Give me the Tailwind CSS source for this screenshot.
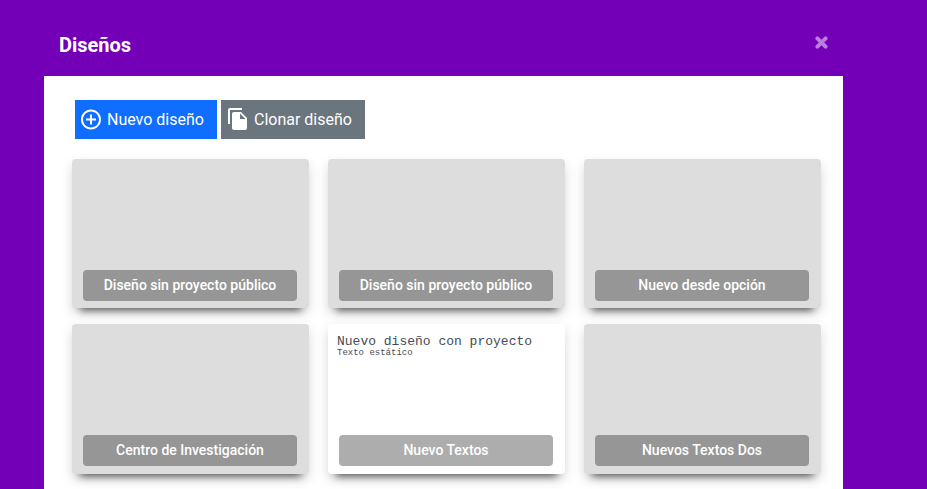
<!DOCTYPE html>
<html lang="es">
<head>
<meta charset="utf-8">
<meta name="viewport" content="width=device-width, initial-scale=1">
<title>Diseños</title>
<script src="https://cdn.jsdelivr.net/npm/@tailwindcss/browser@4"></script>
</head>
<body class="flex min-h-screen flex-col overflow-x-hidden bg-[#7300b6] pr-[84px] pl-11 font-['Roboto',sans-serif]">
  <header class="flex h-[76px] items-center justify-between pt-3.5 pr-[15px] pl-[15px]">
    <h1 class="text-xl leading-7 font-bold text-white">Diseños</h1>
    <button type="button" aria-label="Cerrar" class="pb-1.5 text-white/50">
      <svg class="h-[13px] w-[13px]" viewBox="0 0 13 13" fill="none" stroke="currentColor" stroke-width="4" stroke-linecap="round"><path d="M2.400 2.400 10.600 10.600M10.600 2.400 2.400 10.600"/></svg>
    </button>
  </header>
  <main class="flex-1 bg-white pt-6 pr-[22px] pb-6 pl-7">
    <div class="flex gap-1 pl-[3px]">
      <button type="button" class="flex h-[39px] items-center gap-1 bg-[#106eff] pr-[13px] pl-1 text-base text-white">
        <svg class="h-6 w-6" viewBox="0 0.5 24 24" fill="currentColor"><path d="M13 7h-2v4H7v2h4v4h2v-4h4v-2h-4V7zm-1-5C6.480 2 2 6.480 2 12s4.480 10 10 10 10-4.480 10-10S17.520 2 12 2zm0 18c-4.410 0-8-3.590-8-8s3.590-8 8-8 8 3.590 8 8-3.590 8-8 8z"/></svg>
        Nuevo diseño
      </button>
      <button type="button" class="flex h-[39px] items-center gap-1 bg-[#6b757e] pr-[13px] pl-[5px] text-base text-white">
        <svg class="h-6 w-6" viewBox="0 1 24 24" fill="currentColor"><path d="M16 1H4c-1.100 0-2 .9-2 2v14h2V3h12V1zM8 5h7l6 6v10c0 1.100-.9 2-2 2H8c-1.100 0-2-.9-2-2V7c0-1.100.9-2 2-2z"/><path d="M14 6.500V12h5.500z" fill="#6b757e"/></svg>
        Clonar diseño
      </button>
    </div>
    <div class="mt-5 grid grid-cols-3 gap-x-[19px] gap-y-4 text-sm leading-[31px] font-medium text-white">
      <button type="button" class="flex h-[149px] flex-col justify-end rounded bg-[#ddd] pr-3 pb-[7px] pl-[11px] shadow-[0_5px_12px_rgba(0,0,0,0.15),0_10px_8px_-8px_rgba(0,0,0,0.65)]"><span class="w-full rounded bg-black/32">Diseño sin proyecto público</span></button>
      <button type="button" class="flex h-[149px] flex-col justify-end rounded bg-[#ddd] pr-3 pb-[7px] pl-[11px] shadow-[0_5px_12px_rgba(0,0,0,0.15),0_10px_8px_-8px_rgba(0,0,0,0.65)]"><span class="w-full rounded bg-black/32">Diseño sin proyecto público</span></button>
      <button type="button" class="flex h-[149px] flex-col justify-end rounded bg-[#ddd] pr-3 pb-[7px] pl-[11px] shadow-[0_5px_12px_rgba(0,0,0,0.15),0_10px_8px_-8px_rgba(0,0,0,0.65)]"><span class="w-full rounded bg-black/32">Nuevo desde opción</span></button>
      <button type="button" class="flex h-[150px] flex-col justify-end rounded bg-[#ddd] pr-3 pb-2 pl-[11px] shadow-[0_5px_12px_rgba(0,0,0,0.15),0_10px_8px_-8px_rgba(0,0,0,0.65)]"><span class="w-full rounded bg-black/32">Centro de Investigación</span></button>
      <button type="button" class="flex h-[150px] flex-col justify-between rounded bg-white pt-[11px] pr-3 pb-2 pl-[11px] shadow-[0_5px_12px_rgba(0,0,0,0.15),0_10px_8px_-8px_rgba(0,0,0,0.65)]">
        <span class="-ml-0.5 flex flex-col text-left font-['Liberation_Mono',monospace] text-[#444b54]">
          <span class="text-[13px] leading-[14px]">Nuevo diseño con proyecto</span>
          <span class="text-[9px] leading-[9px]">Texto estático</span>
        </span>
        <span class="w-full rounded bg-black/32">Nuevo Textos</span>
      </button>
      <button type="button" class="flex h-[150px] flex-col justify-end rounded bg-[#ddd] pr-3 pb-2 pl-[11px] shadow-[0_5px_12px_rgba(0,0,0,0.15),0_10px_8px_-8px_rgba(0,0,0,0.65)]"><span class="w-full rounded bg-black/32">Nuevos Textos Dos</span></button>
    </div>
  </main>
</body>
</html>
